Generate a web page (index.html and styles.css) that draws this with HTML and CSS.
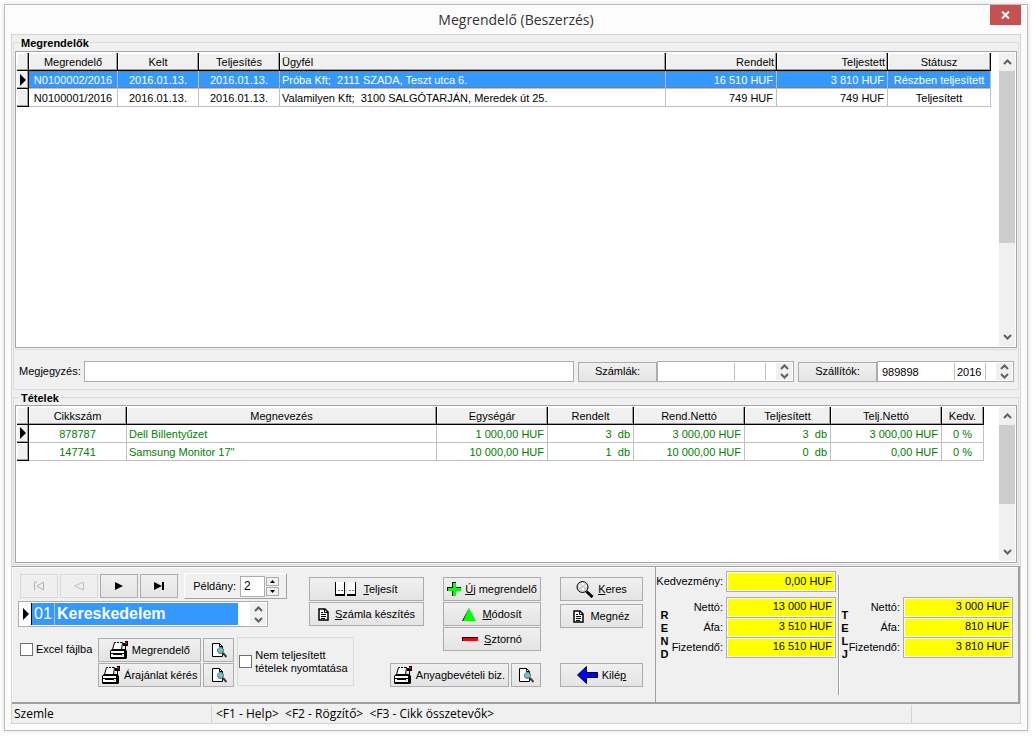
FILE: index.html
```html
<!DOCTYPE html>
<html lang="hu">
<head>
    <meta charset="UTF-8">
    <meta name="viewport" content="width=device-width, initial-scale=1.0">
    <title>Megrendelő (Beszerzés)</title>
    <link rel="stylesheet" href="styles.css">
</head>
<body>
    <!-- Shared icons -->
    <svg class="sprite" aria-hidden="true">
        <symbol id="up" viewBox="0 0 9 6"><path d="M1 5 4.500 1.500 8 5" fill="none" stroke="#606060" stroke-width="2"/></symbol>
        <symbol id="down" viewBox="0 0 9 6"><path d="M1 1 4.500 4.500 8 1" fill="none" stroke="#606060" stroke-width="2"/></symbol>
        <symbol id="printer" viewBox="0 0 18 18">
            <path d="M2 8h13l2 2v7l-1 1H1l-1-1v-7z" fill="#000"/>
            <path d="M1 10h13v2H1zM1 13h13v3H1z" fill="#fff"/>
            <path d="M3 13h9v1H3z" fill="#000"/>
            <path d="M11 14h2v1h-2z" fill="#d0d080"/>
            <path d="M4.500 1.500h8l-1 7h-9z" fill="#fff" stroke="#000"/>
            <path d="M6 1.500h1M9 1.500h1" stroke="#fff"/>
            <path d="M13 2h2V0h3v5h-2v4h-1V5h-2z" fill="#000"/>
            <path d="M15 1h2v2h-2z" fill="#e00030"/>
        </symbol>
        <symbol id="preview" viewBox="0 0 16 16">
            <path d="M1.500 1.500h7l3 3v10h-10z" fill="#fff" stroke="#000"/>
            <path d="M8.500 1.500v3h3" fill="none" stroke="#000"/>
            <circle cx="9.500" cy="8.500" r="3" fill="#9fb4b4" stroke="#606060"/>
            <path d="M7 6h2v2H7zM9 9h2v2H9z" fill="#00e0f0"/>
            <path d="m12 11 3.500 4" stroke="#603030" stroke-width="2"/>
        </symbol>
        <symbol id="page" viewBox="0 0 11 13">
            <path d="M1 1h6l3 3v8H1z" fill="#fff" stroke="#000" stroke-width="1.500"/>
            <path d="M6.500 1v3.500H10M3 4.500h2M3 6.500h5M3 8.500h5M3 10.500h4" fill="none" stroke="#000"/>
        </symbol>
    </svg>

    <div class="window">
        <header class="titlebar">
            <h1 class="title">Megrendelő (Beszerzés)</h1>
            <button type="button" class="close" aria-label="Bezárás">
                <svg width="9" height="8" viewBox="0 0 9 8"><path d="m1 .5 7 7m0-7-7 7" stroke="#fff" stroke-width="2"/></svg>
            </button>
        </header>

        <main class="client">
            <fieldset class="group group-orders">
                <legend>Megrendelők</legend>
                <div class="grid">
                    <div class="grid-body grid-body-orders">
                        <table class="orders">
                            <colgroup>
                                <col class="w12"><col class="w89"><col class="w81"><col class="w81"><col><col class="w111"><col class="w111"><col class="w103">
                            </colgroup>
                            <thead>
                                <tr><th></th><th>Megrendelő</th><th>Kelt</th><th>Teljesítés</th><th class="left">Ügyfél</th><th class="right">Rendelt</th><th class="right">Teljestett</th><th>Státusz</th></tr>
                            </thead>
                            <tbody>
                                <tr class="selected"><th><i class="marker"></i></th><td>N0100002/2016</td><td>2016.01.13.</td><td>2016.01.13.</td><td class="left">Próba Kft;&nbsp; 2111 SZADA, Teszt utca 6.</td><td class="right">16 510 HUF</td><td class="right">3 810 HUF</td><td>Részben teljesített</td></tr>
                                <tr><th></th><td>N0100001/2016</td><td>2016.01.13.</td><td>2016.01.13.</td><td class="left">Valamilyen Kft;&nbsp; 3100 SALGÓTARJÁN, Meredek út 25.</td><td class="right">749 HUF</td><td class="right">749 HUF</td><td>Teljesített</td></tr>
                            </tbody>
                        </table>
                    </div>
                    <div class="scrollbar">
                        <svg width="9" height="6"><use href="#up"/></svg>
                        <div class="track"><div class="thumb thumb-orders"></div></div>
                        <svg width="9" height="6"><use href="#down"/></svg>
                    </div>
                </div>
            </fieldset>

            <div class="remark">
                <label for="remark">Megjegyzés:</label>
                <input type="text" id="remark" class="field">
                <button type="button" class="btn btn-link">Számlák:</button>
                <div class="lookup">
                    <span class="lookup-no"></span><span class="lookup-year"></span>
                    <div class="spin"><button type="button" aria-label="Előző"><svg width="9" height="6"><use href="#up"/></svg></button><button type="button" aria-label="Következő"><svg width="9" height="6"><use href="#down"/></svg></button></div>
                </div>
                <button type="button" class="btn btn-link">Szállítók:</button>
                <div class="lookup">
                    <span class="lookup-no">989898</span><span class="lookup-year">2016</span>
                    <div class="spin"><button type="button" aria-label="Előző"><svg width="9" height="6"><use href="#up"/></svg></button><button type="button" aria-label="Következő"><svg width="9" height="6"><use href="#down"/></svg></button></div>
                </div>
            </div>

            <fieldset class="group group-items">
                <legend>Tételek</legend>
                <div class="grid">
                    <div class="grid-body grid-body-items">
                        <table class="items">
                            <colgroup>
                                <col class="w12"><col class="w98"><col><col class="w111"><col class="w86"><col class="w111"><col class="w86"><col class="w111"><col class="w42">
                            </colgroup>
                            <thead>
                                <tr><th></th><th>Cikkszám</th><th>Megnevezés</th><th>Egységár</th><th>Rendelt</th><th>Rend.Nettó</th><th>Teljesített</th><th>Telj.Nettó</th><th>Kedv.</th></tr>
                            </thead>
                            <tbody>
                                <tr><th><i class="marker"></i></th><td>878787</td><td class="left">Dell Billentyűzet</td><td class="right">1 000,00 HUF</td><td class="right">3&nbsp; db</td><td class="right">3 000,00 HUF</td><td class="right">3&nbsp; db</td><td class="right">3 000,00 HUF</td><td>0 %</td></tr>
                                <tr><th></th><td>147741</td><td class="left">Samsung Monitor 17''</td><td class="right">10 000,00 HUF</td><td class="right">1&nbsp; db</td><td class="right">10 000,00 HUF</td><td class="right">0&nbsp; db</td><td class="right">0,00 HUF</td><td>0 %</td></tr>
                            </tbody>
                        </table>
                    </div>
                    <div class="scrollbar">
                        <svg width="9" height="6"><use href="#up"/></svg>
                        <div class="track"><div class="thumb thumb-items"></div></div>
                        <svg width="9" height="6"><use href="#down"/></svg>
                    </div>
                </div>
            </fieldset>

            <div class="bottom">
                <div class="actions">
                    <div class="records">
                        <div class="nav">
                            <button type="button" class="btn" disabled aria-label="Első"><svg width="12" height="10" viewBox="0 0 12 10"><path d="M4 1H1.500v8M10.500 1v8M10.500 1 4 5l6.500 4" fill="none" stroke="#b0b0b0"/></svg></button>
                            <button type="button" class="btn" disabled aria-label="Előző"><svg width="12" height="10" viewBox="0 0 12 10"><path d="M10.500 1v8L1.500 5z" fill="none" stroke="#c0c0c0"/></svg></button>
                            <button type="button" class="btn" aria-label="Következő"><svg width="8" height="8" viewBox="0 0 8 8"><path d="m0 0 8 4-8 4z"/></svg></button>
                            <button type="button" class="btn" aria-label="Utolsó"><svg width="10" height="8" viewBox="0 0 10 8"><path d="m0 0 8 4-8 4zM8 0h2v8H8z"/></svg></button>
                            <div class="copies">
                                <label for="copies">Példány:</label>
                                <input type="text" id="copies" value="2">
                                <div class="updown">
                                    <button type="button" aria-label="Több"><svg width="5" height="3" viewBox="0 0 5 3"><path d="M0 3 2.500 0 5 3z"/></svg></button>
                                    <button type="button" aria-label="Kevesebb"><svg width="5" height="3" viewBox="0 0 5 3"><path d="M0 0 2.500 3 5 0z"/></svg></button>
                                </div>
                            </div>
                        </div>
                        <div class="division">
                            <i class="marker"></i>
                            <span class="division-code">01</span><span class="division-name">Kereskedelem</span>
                            <div class="spin spin-large"><button type="button" aria-label="Előző"><svg width="9" height="6"><use href="#up"/></svg></button><button type="button" aria-label="Következő"><svg width="9" height="6"><use href="#down"/></svg></button></div>
                        </div>
                    </div>

                    <div class="stack stack-fulfil">
                        <button type="button" class="btn"><svg width="22" height="14" viewBox="0 0 22 14"><path d="M1 0h9v12H1zM12 0h9v12h-9z" fill="#fff"/><path d="M0 0h1v12h8V0h1v14H0zM12 12h8V0h1v14h-9z"/><path d="M3 8.500h2m1 0h2m6 0h2m1 0h2" stroke="#777"/></svg><span class="wide"><u>T</u>eljesít</span></button>
                        <button type="button" class="btn"><svg width="11" height="13"><use href="#page"/></svg><span class="wide"><u>S</u>zámla készítés</span></button>
                    </div>

                    <div class="stack stack-edit">
                        <button type="button" class="btn"><svg width="14" height="14" viewBox="0 0 14 14"><path d="M5 0h4v5h5v4H9v5H5V9H0V5h5z"/><path d="M6 1h3v5h5v3H9v5H6V9H1V6h5z" fill="#0f0"/></svg><span><u>Ú</u>j megrendelő</span></button>
                        <button type="button" class="btn"><svg width="14" height="13" viewBox="0 0 14 13"><path d="M7 0 0 13h2z"/><path d="M7 0 1 13h13z" fill="#0f0"/></svg><span class="wide"><u>M</u>ódosít</span></button>
                        <button type="button" class="btn"><svg width="16" height="4" viewBox="0 0 16 4"><path d="M0 0h16v4H0z" fill="#000"/><path d="M1 1h15v3H1z" fill="#f00"/></svg><span class="wide"><u>S</u>ztornó</span></button>
                    </div>

                    <div class="stack stack-view">
                        <button type="button" class="btn"><svg width="18" height="17" viewBox="0 0 18 17"><circle cx="6.500" cy="6" r="5.500" fill="#d4d4d4" stroke="#000"/><path d="M3 4h2v2H3zm3-2h2v2H6zm0 5h2v2H6zm3-3h2v2H9z" fill="#fff"/><path d="m10.500 10.500 6 5.500" stroke="#000" stroke-width="3"/></svg><span><u>K</u>eres</span></button>
                        <button type="button" class="btn"><svg width="11" height="13"><use href="#page"/></svg><span class="wide">Megnéz</span></button>
                        <button type="button" class="btn exit"><svg width="21" height="18" viewBox="0 0 21 18"><path d="M.5 9 9.500.5v6h11v5h-11v6z" fill="#00f" stroke="#000"/></svg><span>Kilé<u>p</u></span></button>
                    </div>

                    <div class="printing">
                        <label class="check"><input type="checkbox"> Excel fájlba</label>
                        <div class="print-grid">
                            <button type="button" class="btn"><svg width="18" height="18"><use href="#printer"/></svg><span>Megrendelő</span></button>
                            <button type="button" class="btn" aria-label="Megrendelő előnézet"><svg width="16" height="16"><use href="#preview"/></svg></button>
                            <button type="button" class="btn"><svg width="18" height="18"><use href="#printer"/></svg><span>Árajánlat kérés</span></button>
                            <button type="button" class="btn" aria-label="Árajánlat előnézet"><svg width="16" height="16"><use href="#preview"/></svg></button>
                        </div>
                        <label class="check check-box"><input type="checkbox"> <span>Nem teljesített<br>tételek nyomtatása</span></label>
                    </div>

                    <div class="receipt">
                        <button type="button" class="btn btn-receipt"><svg width="18" height="18"><use href="#printer"/></svg><span>Anyagbevételi biz.</span></button>
                        <button type="button" class="btn btn-preview" aria-label="Bizonylat előnézet"><svg width="16" height="16"><use href="#preview"/></svg></button>
                    </div>
                </div>

                <div class="totals">
                    <div class="total-col">
                        <div class="total-row discount"><label for="discount">Kedvezmény:</label><input id="discount" value="0,00 HUF" readonly></div>
                        <div class="total-set">
                            <b class="vertical">R<br>E<br>N<br>D</b>
                            <div class="total-rows">
                                <div class="total-row"><label for="r-net">Nettó:</label><input id="r-net" value="13 000 HUF" readonly></div>
                                <div class="total-row"><label for="r-vat">Áfa:</label><input id="r-vat" value="3 510 HUF" readonly></div>
                                <div class="total-row"><label for="r-sum">Fizetendő:</label><input id="r-sum" value="16 510 HUF" readonly></div>
                            </div>
                        </div>
                    </div>
                    <div class="total-col total-col-done">
                        <div class="total-set">
                            <b class="vertical">T<br>E<br>L<br>J</b>
                            <div class="total-rows">
                                <div class="total-row"><label for="t-net">Nettó:</label><input id="t-net" value="3 000 HUF" readonly></div>
                                <div class="total-row"><label for="t-vat">Áfa:</label><input id="t-vat" value="810 HUF" readonly></div>
                                <div class="total-row"><label for="t-sum">Fizetendő:</label><input id="t-sum" value="3 810 HUF" readonly></div>
                            </div>
                        </div>
                    </div>
                </div>
            </div>

            <footer class="status">
                <span class="status-mode">Szemle</span>
                <span class="status-keys">&lt;F1 - Help&gt;&nbsp; &lt;F2 - Rögzítő&gt;&nbsp; &lt;F3 - Cikk összetevők&gt;</span>
                <span class="status-end"></span>
            </footer>
        </main>
    </div>
</body>
</html>
```

FILE: styles.css
```css
* {
    box-sizing: border-box;
}
body {
    margin: 0;
    padding: 4px 8px 5px 4px;
    height: 100vh;
    min-width: 1000px;
    background: #fff;
    font-family: "Liberation Sans", Arial, sans-serif;
    font-size: 11px;
    line-height: 13px;
    color: #000;
}
button, input {
    font: inherit;
    color: inherit;
    margin: 0;
    padding: 0;
}
svg {
    display: block;
    flex: none;
}
.sprite {
    position: absolute;
    width: 0;
    height: 0;
}

/* Window frame */
.window {
    display: flex;
    flex-direction: column;
    height: 100%;
    min-height: 640px;
    padding: 0 6px 6px;
    background: #fcfcfc;
    border: 1px solid #bdbdbd;
    box-shadow: 0 0 5px rgba(0, 0, 0, 0.15);
}
.titlebar {
    display: flex;
    justify-content: center;
    position: relative;
    height: 29px;
    flex: none;
}
.title {
    margin: 0;
    font-family: "Open Sans", "Noto Sans", sans-serif;
    font-size: 14px;
    line-height: 30px;
    font-weight: normal;
    color: #333;
}
.close {
    position: absolute;
    top: 0;
    right: 0;
    display: flex;
    align-items: center;
    justify-content: center;
    width: 31px;
    height: 20px;
    border: none;
    background: #c75050;
}
.client {
    display: flex;
    flex-direction: column;
    flex: 1;
    min-height: 0;
    background: #f0f0f0;
    border: 1px solid #d4d4d4;
}

/* Group boxes and data grids */
.group {
    display: flex;
    flex-direction: column;
    min-width: 0;
    min-height: 0;
    margin: 0 1px;
    padding: 0 1px 1px;
    border: 1px solid #dcdcdc;
}
.group-orders {
    flex: 315 1 0;
    padding-top: 1px;
}
.group-items {
    flex: 175 1 0;
}
.group legend {
    margin-left: 5px;
    padding: 1px 1px 0;
    height: 15px;
    line-height: 14px;
    font-weight: bold;
}
.grid {
    display: flex;
    flex: 1;
    height: 100%;
    min-height: 0;
    padding: 1px;
    background: #fff;
    border: 1px solid #a5a5ad;
}
.grid-body {
    flex: 1;
    min-width: 0;
}
.grid-body-orders {
    padding-right: 8px;
}
.grid-body-items {
    padding-right: 15px;
}
table {
    width: 100%;
    table-layout: fixed;
    border-collapse: separate;
    border-spacing: 0;
}
.w12 { width: 12px; }
.w42 { width: 42px; }
.w81 { width: 81px; }
.w86 { width: 86px; }
.w89 { width: 89px; }
.w98 { width: 98px; }
.w103 { width: 103px; }
.w111 { width: 111px; }
th, td {
    height: 18px;
    padding: 2px 2px 0;
    text-align: center;
    white-space: nowrap;
    font-weight: normal;
    border-right: 1px solid #c0c0c0;
    border-bottom: 1px solid #c0c0c0;
}
th {
    background: #f0f0f0;
    border-color: #000;
    box-shadow: inset -1px -1px #a0a0a0, inset 1px 1px #fff;
}
tbody th {
    padding: 0 2px 0 3px;
}
td.right {
    padding-right: 3px;
}
.left {
    text-align: left;
}
.right {
    text-align: right;
}
.items td {
    color: #008000;
}
/* Dotted focus line along the selected row */
.selected td {
    color: #fff;
    background:
        repeating-linear-gradient(90deg, #c06010 0 1px, #3399ff 1px 2px) top / 100% 1px no-repeat,
        repeating-linear-gradient(90deg, #c06010 0 1px, #3399ff 1px 2px) bottom / 100% 1px no-repeat,
        #3399ff;
}
.marker {
    display: block;
    flex: none;
    width: 0;
    border: 6px solid transparent;
    border-left-color: #000;
    border-right: none;
}
.scrollbar {
    display: flex;
    flex-direction: column;
    align-items: center;
    width: 16px;
    padding: 6px 0;
    background: #f0f0f0;
}
.track {
    flex: 1;
    width: 100%;
    margin: 6px 0;
}
.thumb {
    background: #cdcdcd;
}
.thumb-orders {
    height: 67%;
}
.thumb-items {
    height: 67%;
}

/* Buttons */
.btn {
    display: flex;
    align-items: center;
    justify-content: center;
    gap: 4px;
    height: 24px;
    white-space: nowrap;
    background: linear-gradient(#f0f0f0, #e4e4e4);
    border: 1px solid #acacac;
}
.btn:disabled {
    background: #efefef;
    border-color: #d9d9d9;
}
.wide {
    margin-left: 2px;
}
.btn-link {
    width: 79px;
    height: 20px;
    margin-left: 4px;
}

/* Remark row */
.remark {
    display: flex;
    align-items: center;
    flex: none;
    height: 40px;
    margin: 0 1px;
    padding: 5px 4px 0 5px;
    border: 1px solid #dcdcdc;
    border-top: none;
}
.field {
    flex: 1;
    min-width: 0;
    height: 21px;
    margin-left: 3px;
    border: 1px solid #abadb3;
    background: #fff;
}
.lookup {
    display: flex;
    width: 137px;
    height: 21px;
    padding: 1px;
    line-height: 19px;
    background: #fff;
    border: 1px solid #abadb3;
}
.lookup-no {
    width: 76px;
    padding-left: 3px;
    border-right: 1px solid #c0c0c0;
}
.lookup-year {
    width: 31px;
    padding-left: 2px;
    border-right: 1px solid #c0c0c0;
}
.spin {
    display: flex;
    flex-direction: column;
    width: 16px;
    margin-left: auto;
    background: #f0f0f0;
}
.spin button {
    display: flex;
    align-items: center;
    justify-content: center;
    flex: 1;
    min-height: 0;
    border: none;
    background: none;
}

/* Bottom panel */
.bottom {
    display: flex;
    flex: none;
    height: 138px;
    margin-top: 1px;
    border-top: 1px solid #a0a0a0;
    border-bottom: 2px solid #a0a0a0;
    border-right: 2px solid #a0a0a0;
    box-shadow: inset 1px 1px #fff;
}
.actions {
    display: grid;
    flex: 1;
    grid-template-columns: 272px 115px 98px 83px;
    grid-template-rows: 63px 50px;
    justify-content: start;
    column-gap: 19px;
    padding: 7px 0 0 6px;
    border-right: 1px solid #a0a0a0;
}
.records {
    grid-area: 1 / 1;
}
.nav {
    display: flex;
    gap: 2px;
    padding-left: 2px;
    width: 270px;
}
.nav .btn {
    width: 38px;
}
.copies {
    display: flex;
    align-items: center;
    justify-content: flex-end;
    width: 103px;
    height: 26px;
    margin: -1px 0 0 4px;
    padding-right: 7px;
    border: 1px solid;
    border-color: #fff #a0a0a0 #a0a0a0 #fff;
}
.copies input {
    width: 25px;
    height: 21px;
    margin-left: 4px;
    padding-left: 3px;
    font-size: 12px;
    border: 1px solid #abadb3;
    background: #fff;
}
.updown {
    display: flex;
    flex-direction: column;
    gap: 1px;
    margin-left: 1px;
}
.updown button {
    display: flex;
    align-items: center;
    justify-content: center;
    width: 13px;
    height: 9px;
    border: 1px solid #acacac;
    background: #f0f0f0;
}
.division {
    display: flex;
    align-items: center;
    width: 250px;
    height: 26px;
    margin-top: 2px;
    padding: 1px;
    font-size: 16px;
    line-height: 22px;
    color: #fff;
    background: #fff;
    border: 1px solid #abadb3;
}
.division .marker {
    margin: 0 2px 0 3px;
}
.division-code {
    width: 24px;
    padding-left: 2px;
    background: #3399ff;
    border-left: 1px solid #000;
    border-right: 1px solid #c0c0c0;
}
.division-name {
    width: 183px;
    padding-left: 2px;
    font-weight: bold;
    background: #3399ff;
}
.spin-large {
    height: 100%;
}
.stack {
    display: flex;
    flex-direction: column;
    gap: 1px;
    padding-top: 3px;
}
.stack-fulfil {
    grid-area: 1 / 2;
}
.stack-edit {
    grid-area: 1 / 3 / 3 / 3;
}
.stack-view {
    grid-area: 1 / 4 / 3 / 4;
    gap: 3px;
}
.exit {
    margin-top: auto;
}
.printing {
    grid-area: 2 / 1 / 2 / 3;
    display: flex;
    align-items: flex-end;
    margin-left: 2px;
}
.print-grid {
    display: grid;
    grid-template-columns: 103px 31px;
    gap: 1px 2px;
    margin: 0 3px 0 6px;
}
.check {
    display: flex;
    align-items: center;
    align-self: flex-start;
    gap: 3px;
    height: 24px;
    white-space: nowrap;
}
.check input {
    appearance: none;
    width: 13px;
    height: 13px;
    background: #fff;
    border: 1px solid #707070;
}
.check-box {
    width: 117px;
    height: 49px;
    padding-left: 1px;
    border: 1px solid #dcdcdc;
}
.receipt {
    grid-area: 2 / 2 / 2 / 4;
    display: flex;
    align-items: flex-end;
    justify-content: flex-end;
    gap: 2px;
}
.btn-receipt {
    width: 119px;
}
.btn-preview {
    width: 30px;
}

/* Totals */
.totals {
    display: flex;
    flex: none;
    width: 362px;
}
.total-col {
    width: 182px;
    padding: 4px 2px 0 0;
}
.total-col-done {
    width: 177px;
    height: 120px;
    margin-top: 8px;
    padding: 22px 2px 0 2px;
    border-left: 1px solid #a0a0a0;
    box-shadow: inset 1px 0 #fff;
}
.total-set {
    display: flex;
    justify-content: space-between;
}
.total-row {
    display: flex;
    align-items: center;
    justify-content: flex-end;
    gap: 3px;
    height: 20px;
}
.total-row input {
    width: 110px;
    height: 21px;
    padding: 0 3px 2px 0;
    text-align: right;
    background: #ff0;
    border: 1px solid #abadb3;
    box-shadow: inset 0 0 0 1px #fff;
}
.discount {
    height: 21px;
    margin-bottom: 5px;
}
.vertical {
    width: 9px;
    margin: 12px 0 0 4px;
    text-align: center;
}
.total-col-done .vertical {
    margin-left: 0;
}

/* Status bar */
.status {
    display: flex;
    flex: none;
    height: 19px;
    padding-top: 1px;
    font-family: "Open Sans", "Noto Sans", sans-serif;
    font-size: 12px;
    line-height: 18px;
}
.status-mode {
    width: 200px;
    padding-left: 2px;
    border-right: 1px solid #d4d4d4;
}
.status-keys {
    flex: 1;
    padding-left: 4px;
    border-right: 1px solid #d4d4d4;
}
.status-end {
    width: 108px;
}
```
